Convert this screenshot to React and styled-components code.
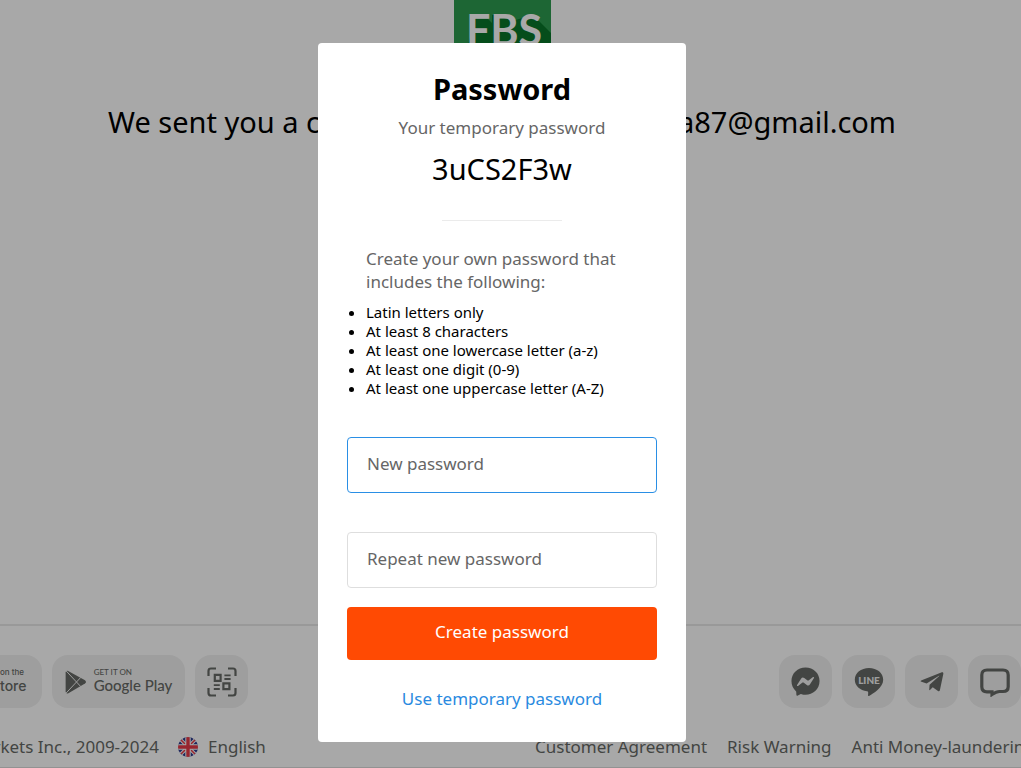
import React from "react";
import styled, { createGlobalStyle } from "styled-components";
import { FaTelegramPlane, FaFacebookMessenger } from "react-icons/fa";

const Global = createGlobalStyle`
  * { box-sizing: border-box; }
  html, body { margin: 0; background: #fff; }
  body { overflow: hidden; font-family: "Noto Sans", sans-serif; color: #000; }
  h1, h2, p, ul { margin: 0; }
`;

const Page = styled.div`
  min-height: 100vh;
  display: flex;
  flex-direction: column;
  overflow: hidden;
`;

const Main = styled.main`
  flex: 1;
  padding-right: 17px;
  display: flex;
  flex-direction: column;
  align-items: center;
`;

const Logo = styled.svg`
  display: block;
  width: 97px;
  height: 85px;
`;

const SentMessage = styled.h1`
  width: 100%;
  max-width: 788px;
  margin-top: 16px;
  display: flex;
  justify-content: space-between;
  font-size: 29px;
  line-height: 42px;
  font-weight: 400;
  white-space: nowrap;
`;

const Footer = styled.footer`
  border-top: 2px solid #e8e8e8;
  border-bottom: 1px solid #dedede;
  padding-top: 29px;
  color: #676a66;
`;

const FooterRow = styled.div`
  display: flex;
  align-items: center;
`;

const Group = styled.div`
  display: flex;
  gap: 10px;
  margin-left: ${(p) => (p.$end ? "auto" : "0")};
`;

const Tile = styled.a`
  height: 53px;
  width: ${(p) => p.$width || 53}px;
  display: flex;
  align-items: center;
  justify-content: center;
  gap: 7px;
  border-radius: 16px;
  background: #f0f0f0;
  color: inherit;
  text-decoration: none;
`;

const EdgeTile = styled(Tile)`
  justify-content: flex-start;
  border-radius: 0 16px 16px 0;
`;

const StoreLabel = styled.span`
  display: flex;
  flex-direction: column;
  padding-bottom: 2px;
  font-family: ${(p) => (p.$apple ? "Inter" : "Lato")}, sans-serif;
  font-size: ${(p) => (p.$apple ? 14 : 15)}px;
  line-height: 17px;
  font-weight: 500;
  white-space: nowrap;
`;

const StoreHint = styled.small`
  font-size: 8px;
  line-height: 9px;
`;

const LegalRow = styled(FooterRow)`
  height: 59px;
  padding-top: 19px;
  align-items: flex-start;
  font-size: 17px;
  line-height: 40px;
  white-space: nowrap;
`;

const Copyright = styled.span`
  width: 159px;
  display: flex;
  justify-content: flex-end;
`;

const Language = styled.a`
  margin-left: 19px;
  display: flex;
  align-items: center;
  gap: 10px;
  color: inherit;
  text-decoration: none;
`;

const LegalNav = styled.nav`
  flex: 0 0 486px;
  min-width: 0;
  margin-left: auto;
  display: flex;
  gap: 20px;
`;

const LegalLink = styled.a`
  color: inherit;
  text-decoration: none;
`;

const Overlay = styled.div`
  position: fixed;
  inset: 0;
  padding: 43px 17px 26px 0;
  display: flex;
  justify-content: center;
  align-items: flex-start;
  background: rgba(0, 0, 0, 0.34);
`;

const Modal = styled.form`
  width: 368px;
  padding: 26px 29px 32px;
  display: flex;
  flex-direction: column;
  border-radius: 4px;
  background: #fff;
  text-align: center;
`;

const Title = styled.h2`
  font-size: 29px;
  line-height: 40px;
  font-weight: 700;
`;

const Hint = styled.p`
  margin-top: 7px;
  font-size: 17px;
  line-height: 23px;
  color: #666;
`;

const TempPassword = styled.p`
  margin-top: 10px;
  font-size: 29px;
  line-height: 40px;
`;

const Divider = styled.hr`
  width: 120px;
  height: 1px;
  margin: 31px auto 26px;
  border: 0;
  background: #ebebeb;
`;

const Rules = styled.section`
  padding-left: 19px;
  text-align: left;
`;

const RulesTitle = styled.p`
  font-size: 17px;
  line-height: 23px;
  color: #666;
`;

const RuleList = styled.ul`
  margin-top: 10px;
  padding: 0;
  font-size: 15px;
  line-height: 19px;
`;

const Field = styled.input`
  width: 100%;
  height: 56px;
  margin-top: 39px;
  padding: 0 19px 3px;
  border: 1px solid ${(p) => (p.$active ? "#2a8fe5" : "#dedede")};
  border-radius: 4px;
  background: #fff;
  font: 17px "Noto Sans", sans-serif;
  outline: none;
  &::placeholder { color: #666; opacity: 1; }
`;

const Submit = styled.button`
  height: 53px;
  margin-top: 19px;
  padding: 0 0 4px;
  border: 0;
  border-radius: 4px;
  background: #ff4a03;
  color: #fff;
  font: 17px "Noto Sans", sans-serif;
`;

const TempLink = styled.a`
  margin-top: 27px;
  font-size: 17px;
  line-height: 23px;
  color: #2a8ae0;
  text-decoration: none;
`;

const PlayIcon = () => (
  <svg width="22" height="24" viewBox="0 0 22 24" aria-hidden="true">
    <path fill="currentColor" d="M.6 2.6Q.8 0 3.2 1L20 10.2Q22 12 20 13.6L3.4 23.2Q.9 24.2.6 21.6Z" />
    <path fill="none" stroke="#f0f0f0" strokeWidth="1" d="M1 .8 15.8 16.6M1 23.2 15.8 7.4" />
  </svg>
);

const QrIcon = () => (
  <svg width="30" height="30" viewBox="0 0 30 30" fill="none" stroke="currentColor" strokeWidth="2.2" aria-hidden="true">
    <path d="M1.5 9V4Q1.5 1.5 4 1.5H9M21 1.5H26Q28.5 1.5 28.5 4V9M28.5 21V26Q28.5 28.5 26 28.5H21M9 28.5H4Q1.5 28.5 1.5 26V21" />
    <path d="M7.8 7.8H13.6V13.8H7.8ZM16.4 16.4H22.4V22.2H16.4Z" />
    <path strokeWidth="1.8" d="M17.4 8.4H23.6M17.4 12H23.6M6.8 18.2H12.8M6.8 22H12.8" />
  </svg>
);

const LineIcon = () => (
  <svg width="30" height="30" viewBox="0 0 30 30" aria-hidden="true">
    <path fill="currentColor" d="M15 1C7 1 .8 6 .8 12.8.8 18.8 6 23.4 13 24.3 14.5 24.6 14.3 25.5 14 28.3 13.9 29 14.4 29.3 15 29 19 26.8 29.2 20.8 29.2 12.8 29.2 6 23 1 15 1Z" />
    <text x="15" y="17" textAnchor="middle" fill="#f0f0f0" fontFamily="Lato, sans-serif" fontSize="10" fontWeight="900">LINE</text>
  </svg>
);

const ChatIcon = () => (
  <svg width="30" height="30" viewBox="0 0 30 30" fill="none" stroke="currentColor" strokeWidth="3.2" aria-hidden="true">
    <path d="M12 27.5V24.8H7Q1.8 24.8 1.8 19.8V8Q1.8 3 7 3H23Q28.2 3 28.2 8V19.8Q28.2 24.5 23 24.5H19.5Q16.5 24.5 12 27.5Z" />
  </svg>
);

const FlagIcon = () => (
  <svg width="20" height="20" viewBox="0 0 20 20" aria-hidden="true">
    <defs><clipPath id="flag"><circle cx="10" cy="10" r="10" /></clipPath></defs>
    <g clipPath="url(#flag)">
      <path fill="#2d3a8c" d="M0 0H20V20H0Z" />
      <path stroke="#fff" strokeWidth="3.4" d="M0 0 20 20M20 0 0 20" />
      <path stroke="#e63946" strokeWidth="1.5" d="M0 0 20 20M20 0 0 20" />
      <path stroke="#fff" strokeWidth="5.4" d="M10 0V20M0 10H20" />
      <path stroke="#e63946" strokeWidth="3.4" d="M10 0V20M0 10H20" />
    </g>
  </svg>
);

const FbsLogo = () => (
  <Logo viewBox="0 0 97 85" role="img" aria-label="FBS">
    <path fill="#2d9c50" d="M0 0H97V85H0Z" />
    <path fill="#087529" d="M20 19 34 19 38 23V15H52L58 21 72 17 84 20 97 33V85H14V46Z" />
    <text x="50" y="46" textAnchor="middle" fill="#fff" fontFamily="Lato, sans-serif" fontSize="43" fontWeight="700">FBS</text>
  </Logo>
);

export default function App() {
  return (
    <>
      <Global />
      <Page>
        <Main>
          <FbsLogo />
          <SentMessage>
            <span>We sent you a code</span>
            <span>a87@gmail.com</span>
          </SentMessage>
        </Main>
        <Footer>
          <FooterRow>
            <Group>
              <EdgeTile href="#" $width={42}>
                <StoreLabel $apple><StoreHint>on the</StoreHint>tore</StoreLabel>
              </EdgeTile>
              <Tile href="#" $width={133}>
                <PlayIcon />
                <StoreLabel><StoreHint>GET IT ON</StoreHint>Google Play</StoreLabel>
              </Tile>
              <Tile href="#" aria-label="QR code"><QrIcon /></Tile>
            </Group>
            <Group $end>
              <Tile href="#" aria-label="Messenger"><FaFacebookMessenger size={29} /></Tile>
              <Tile href="#" aria-label="LINE"><LineIcon /></Tile>
              <Tile href="#" aria-label="Telegram"><FaTelegramPlane size={26} /></Tile>
              <Tile href="#" aria-label="Chat"><ChatIcon /></Tile>
            </Group>
          </FooterRow>
          <LegalRow>
            <Copyright>rkets Inc., 2009-2024</Copyright>
            <Language href="#"><FlagIcon />English</Language>
            <LegalNav>
              <LegalLink href="#">Customer Agreement</LegalLink>
              <LegalLink href="#">Risk Warning</LegalLink>
              <LegalLink href="#">Anti Money-laundering</LegalLink>
            </LegalNav>
          </LegalRow>
        </Footer>
      </Page>
      <Overlay>
        <Modal role="dialog" aria-labelledby="password-title">
          <Title id="password-title">Password</Title>
          <Hint>Your temporary password</Hint>
          <TempPassword>3uCS2F3w</TempPassword>
          <Divider />
          <Rules>
            <RulesTitle>Create your own password that includes the following:</RulesTitle>
            <RuleList>
              <li>Latin letters only</li>
              <li>At least 8 characters</li>
              <li>At least one lowercase letter (a-z)</li>
              <li>At least one digit (0-9)</li>
              <li>At least one uppercase letter (A-Z)</li>
            </RuleList>
          </Rules>
          <Field $active type="password" aria-label="New password" placeholder="New password" />
          <Field type="password" aria-label="Repeat new password" placeholder="Repeat new password" />
          <Submit type="button">Create password</Submit>
          <TempLink href="#">Use temporary password</TempLink>
        </Modal>
      </Overlay>
    </>
  );
}
